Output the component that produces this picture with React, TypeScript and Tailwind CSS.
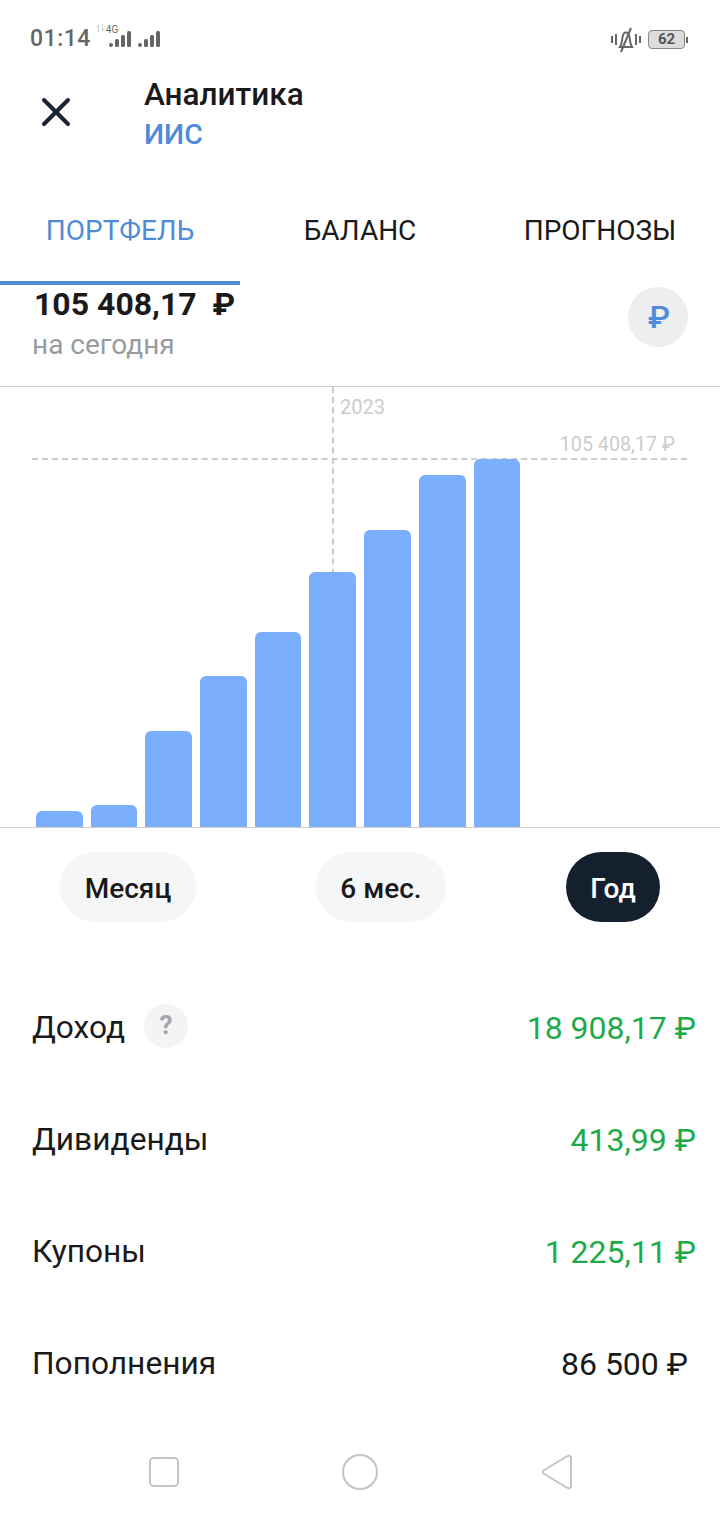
import { X } from 'lucide-react';

const bars = [16, 22, 96, 151, 195, 255, 297, 352, 368];

const rows = [
  { label: 'Доход', value: '18 908,17 ₽', green: true, help: true },
  { label: 'Дивиденды', value: '413,99 ₽', green: true },
  { label: 'Купоны', value: '1 225,11 ₽', green: true },
  { label: 'Пополнения', value: '86 500 ₽', green: false },
];

function Signal({ className }: { className?: string }) {
  return (
    <svg width="22" height="18" viewBox="0 0 22 18" className={className} fill="#666666">
      <rect x="0" y="13" width="4" height="4" rx="2" />
      <rect x="6" y="9" width="4" height="8" rx="1.5" />
      <rect x="12" y="5" width="4" height="12" rx="1.5" />
      <rect x="18" y="1" width="4" height="16" rx="1.5" />
    </svg>
  );
}

function StatusBar() {
  return (
    <div className="h-[76px] pl-[30px] pr-[35px] pt-[3px] flex items-center justify-between">
      <div className="flex items-center">
        <span className="text-[23px] font-medium text-[#666666] tracking-[0.5px]">01:14</span>
        <div className="relative ml-[18px] w-[22px] h-[30px]">
          <svg width="9" height="8" viewBox="0 0 9 8" fill="none" stroke="#c8c8c8" className="absolute top-[-1px] left-[-13px]">
            <path d="M2.500 8V1M0.500 3l2-2M6.500 0v7M8.500 5l-2 2" />
          </svg>
          <span className="absolute top-[-3px] left-[-3px] text-[10px] text-[#666666]">4G</span>
          <Signal className="absolute bottom-[7px] left-0" />
        </div>
        <Signal className="ml-[7px] mt-[-2px]" />
      </div>
      <div className="flex items-center">
        <svg width="30" height="26" viewBox="0 0 30 26" fill="none" stroke="#666666" strokeWidth="2">
          <path d="M1 9v7M5 7v11M25 7v11M29 9v7" />
          <path d="M9 20c2-3 2-6 2.500-10 .5-3 2-4.500 3.500-4.500s3 1.500 3.500 4.500c.5 4 .5 7 2.500 10z" />
          <path d="M20 1L10 25" />
        </svg>
        <div className="relative ml-[7px] w-[37px] h-[19px] rounded-[4px] border border-[#888888] bg-[#dcdcdc] flex items-center justify-center">
          <span className="text-[15px] font-bold text-[#555555]">62</span>
          <span className="absolute -right-[4px] top-[6px] w-[2px] h-[6px] bg-[#666666]" />
        </div>
      </div>
    </div>
  );
}

function Tabs() {
  const tabs = ['ПОРТФЕЛЬ', 'БАЛАНС', 'ПРОГНОЗЫ'];
  return (
    <div className="grid grid-cols-3 h-[133px]">
      {tabs.map((tab, i) => (
        <div
          key={tab}
          className={`flex items-center justify-center text-[28px] pt-[28px] border-b-4 ${
            i === 0 ? 'text-[#4f8bd8] border-[#4f8bd8]' : 'text-[#1a1a1a] border-transparent'
          }`}
        >
          {tab}
        </div>
      ))}
    </div>
  );
}

function Chart() {
  return (
    <div className="relative h-[442px] border-y border-[#cfcfcf]">
      <div className="absolute left-[332px] top-0 bottom-0 border-l-2 border-dashed border-[#cccccc]" />
      <span className="absolute left-[340px] top-[5px] text-[20px] text-[#cccccc]">2023</span>
      <span className="absolute right-[45px] top-[43px] text-[19.700px] text-[#cccccc]">105 408,17 ₽</span>
      <div className="absolute left-[32px] right-[33px] top-[71px] border-t-2 border-dashed border-[#cccccc]" />
      <div className="absolute left-[36px] bottom-0 flex items-end gap-[8px]">
        {bars.map((h, i) => (
          <div
            key={i}
            className="w-[46.700px] bg-[#7baefc] rounded-t-[6px]"
            style={{ height: h }}
          />
        ))}
      </div>
    </div>
  );
}

function Periods() {
  return (
    <div className="flex items-center justify-between pl-[60px] pr-[60px] pt-[24px]">
      <div className="h-[70px] w-[136px] pt-[3px] rounded-full bg-[#f5f6f7] flex items-center justify-center text-[28px] font-medium text-[#1a1a1a]">
        Месяц
      </div>
      <div className="h-[70px] w-[130px] pt-[3px] rounded-full bg-[#f5f6f7] flex items-center justify-center text-[28px] font-medium text-[#1a1a1a]">
        6 мес.
      </div>
      <div className="h-[70px] w-[94px] pt-[3px] rounded-full bg-[#15202e] flex items-center justify-center text-[28px] font-medium text-white">
        Год
      </div>
    </div>
  );
}

export default function App() {
  return (
    <div className="w-[720px] h-[1520px] bg-white flex flex-col font-['Roboto',sans-serif]">
      <StatusBar />
      <div className="h-[76px] flex items-start">
        <div className="w-[144px] pl-[32px] pt-[12px] flex items-center">
          <X size={48} strokeWidth={2} color="#1a2433" />
        </div>
        <div className="flex flex-col">
          <span className="text-[31.500px] leading-[38px] font-medium text-[#1a1a1a]">Аналитика</span>
          <span className="pt-[1px] text-[28.500px] leading-[40px] font-medium text-[#4f8bd8]">ИИС</span>
        </div>
      </div>
      <Tabs />
      <div className="h-[101px] pl-[32px] pr-[32px] flex justify-between">
        <div className="flex flex-col">
          <span className="pl-[2px] text-[32px] leading-[38px] font-bold text-[#1a1a1a]">105 408,17&nbsp; ₽</span>
          <span className="mt-[4px] text-[28px] leading-[36px] text-[#999c9f]">на сегодня</span>
        </div>
        <div className="mt-[2px] w-[60px] h-[60px] pl-[2px] rounded-full bg-[#eceef0] flex items-center justify-center text-[32px] font-medium text-[#4f8bd8]">
          ₽
        </div>
      </div>
      <Chart />
      <Periods />
      <div className="flex flex-col pl-[32px] pr-[24px] pt-[50px]">
        {rows.map((row) => (
          <div key={row.label} className="h-[112px] flex items-center justify-between">
            <div className="flex items-center">
              <span className="text-[31.700px] text-[#1a1a1a]">{row.label}</span>
              {row.help && (
                <span className="ml-[19px] -mt-[4px] w-[44px] h-[44px] rounded-full bg-[#f3f4f5] flex items-center justify-center text-[26px] font-bold text-[#a3a6ab]">
                  ?
                </span>
              )}
            </div>
            <span
              className={`text-[32px] ${row.green ? 'text-[#1eaa4b]' : 'text-[#1a1a1a] pr-[8px]'}`}
            >
              {row.value}
            </span>
          </div>
        ))}
      </div>
      <div className="mt-auto h-[96px] flex items-center gap-[163px] pl-[149px] pb-[1px]">
        <div className="w-[30px] h-[30px] rounded-[5px] border-2 border-[#c4c4c4]" />
        <div className="w-[36px] h-[36px] rounded-full border-2 border-[#c4c4c4]" />
        <svg width="32" height="36" viewBox="0 0 32 36" fill="none" stroke="#c4c4c4" strokeWidth="2">
          <path d="M2.500 16.500L26.500 2c1.500-.9 3.500 0 3.500 2v28c0 2-2 2.900-3.500 2L2.500 19.500c-1-.7-1-2.300 0-3z" />
        </svg>
      </div>
    </div>
  );
}
